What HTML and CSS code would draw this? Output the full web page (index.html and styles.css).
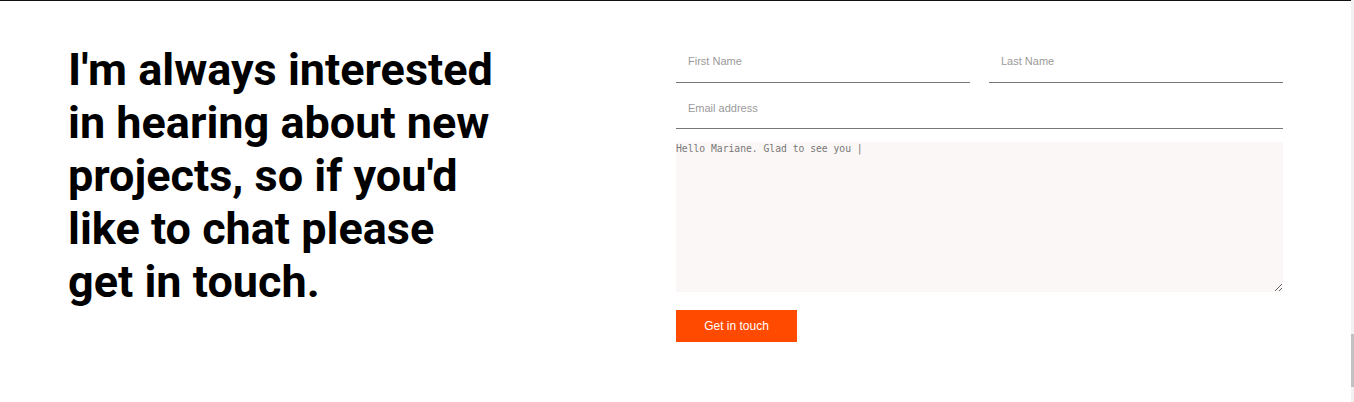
FILE: index.html
```html
<!DOCTYPE html>
<html lang="en">
<head>
<meta charset="utf-8">
<title>Contact</title>
<link rel="stylesheet" href="styles.css">
</head>
<body>
<div class="page">
  <section class="contact">
    <div class="intro">
      <h2 class="intro-title">I'm always interested in hearing about new projects, so if you'd like to chat please get in touch.</h2>
    </div>
    <form class="form">
      <div class="row">
        <input class="field" type="text" placeholder="First Name">
        <input class="field" type="text" placeholder="Last Name">
      </div>
      <input class="field field-full" type="email" placeholder="Email address">
      <textarea class="message">Hello Mariane. Glad to see you |</textarea>
      <button class="submit" type="button">Get in touch</button>
    </form>
  </section>
  <div class="scrollbar"><div class="thumb"></div></div>
</div>
</body>
</html>
```

FILE: styles.css
```css
* { box-sizing: border-box; }
html, body { margin: 0; padding: 0; background: #fff; }
body { font-family: "Liberation Sans", Arial, sans-serif; overflow: hidden; }

.page {
  display: flex;
  height: 402px;
}

.contact {
  flex: 1;
  display: grid;
  grid-template-columns: 676px 607px;
  border-top: 1px solid #111;
  align-content: start;
}

.intro { padding: 42px 0 0 68px; }
.intro-title {
  margin: 0;
  width: 440px;
  font-family: Roboto, "Noto Sans", sans-serif;
  font-weight: 700;
  font-size: 45px;
  line-height: 53px;
  color: #000;
}

.form {
  display: flex;
  flex-direction: column;
  align-items: flex-start;
  padding-top: 39px;
}

.row {
  display: flex;
  gap: 19px;
  width: 100%;
  margin-bottom: 4px;
}

.field {
  display: block;
  width: 100%;
  height: 42px;
  padding: 0 12px;
  border: none;
  border-bottom: 1px solid #777;
  outline: none;
  background: transparent;
  font-family: "Liberation Sans", Arial, sans-serif;
  font-size: 11px;
  color: #333;
}
.row .field { height: 43px; }
.field::placeholder { color: #9a9a9a; }

.field-full { margin-bottom: 13px; }

.message {
  display: block;
  width: 607px;
  height: 150px;
  padding: 1px 0 0 0;
  border: none;
  outline: none;
  background: #fbf7f6;
  font-family: "DejaVu Sans Mono", monospace;
  font-size: 9.7px;
  color: #777;
  margin-bottom: 18px;
}

.submit {
  width: 121px;
  height: 32px;
  border: none;
  background: #ff4a00;
  color: #fff;
  font-family: "Liberation Sans", Arial, sans-serif;
  font-size: 12px;
  padding: 0;
}

.scrollbar {
  width: 3px;
  background: #f1f1f1;
  display: flex;
  flex-direction: column;
  padding-top: 334px;
}
.thumb {
  height: 53px;
  background: #c1c1c1;
}
```
